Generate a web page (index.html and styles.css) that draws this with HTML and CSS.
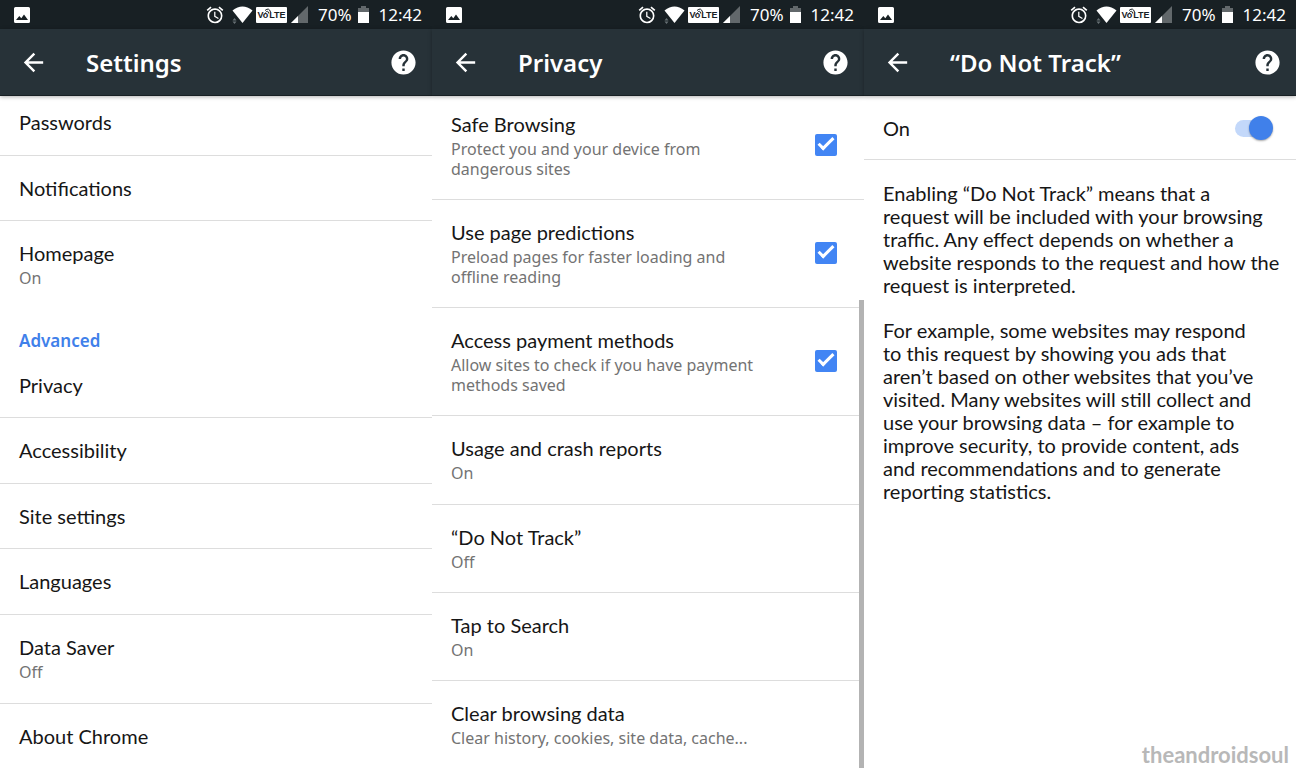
FILE: index.html
```html
<!DOCTYPE html>
<html lang="en">
<head>
    <meta charset="UTF-8">
    <meta name="viewport" content="width=device-width, initial-scale=1">
    <title>Chrome Settings</title>
    <link rel="stylesheet" href="styles.css">
</head>
<body>
<!-- Shared icons -->
<svg class="icon-defs" aria-hidden="true">
    <symbol id="icon-photo" viewBox="0 0 16 16">
        <path fill="#fff" fill-rule="evenodd" d="M1.5 0h13A1.5 1.5 0 0 1 16 1.500v13a1.500 1.500 0 0 1-1.500 1.500h-13A1.500 1.500 0 0 1 0 14.500v-13A1.500 1.500 0 0 1 1.500 0zM2 13h12L10 7.500 7.300 11.300 5.300 9z"/>
    </symbol>
    <symbol id="icon-alarm" viewBox="0 0 24 24">
        <path fill="#fff" d="M22 5.720l-4.600-3.860-1.290 1.530 4.600 3.860L22 5.720zM7.880 3.390L6.600 1.860 2 5.710l1.290 1.530 4.590-3.850zM12.500 8H11v6l4.750 2.850.750-1.230-4-2.370V8zM12 4c-4.970 0-9 4.030-9 9s4.020 9 9 9a9 9 0 0 0 0-18zm0 16c-3.870 0-7-3.130-7-7s3.130-7 7-7 7 3.130 7 7-3.130 7-7 7z"/>
    </symbol>
    <symbol id="icon-wifi" viewBox="0 0 21 18">
        <path fill="#fff" d="M0.500 4.500Q10.500-3.500 20.500 4.500L10.500 17z"/>
        <path fill="#677074" d="M0.500 14.500L2.500 12l2 2.500zM0.500 15.500l2 2.500 2-2.500z"/>
    </symbol>
    <symbol id="icon-signal" viewBox="0 0 17 17">
        <path fill="#62686b" d="M17 0v17H0z"/>
        <path fill="#fff" d="M7 10v7H0z"/>
    </symbol>
    <symbol id="icon-battery" viewBox="0 0 11 17">
        <path fill="#62686b" d="M3 0h5v2h3v5H0V2h3z"/>
        <path fill="#fff" d="M0 6h11v11H0z"/>
    </symbol>
    <symbol id="icon-waves" viewBox="0 0 8 7">
        <path fill="none" stroke="#182024" d="M1 2.500Q5-1 6.500 4M1.500 4.500Q4 1.500 4.700 5.500"/>
    </symbol>
    <symbol id="icon-back" viewBox="0 0 24 24">
        <path fill="#fff" d="M20 11H7.830l5.590-5.590L12 4l-8 8 8 8 1.410-1.410L7.830 13H20v-2z"/>
    </symbol>
    <symbol id="icon-help" viewBox="0 0 24 24">
        <path fill="#fff" d="M12 2C6.480 2 2 6.480 2 12s4.480 10 10 10 10-4.480 10-10S17.520 2 12 2zm1 17h-2v-2h2v2zm2.070-7.750l-.9.920C13.450 12.900 13 13.500 13 15h-2v-.5c0-1.100.450-2.100 1.170-2.830l1.240-1.260c.370-.360.590-.860.590-1.410 0-1.100-.9-2-2-2s-2 .9-2 2H8c0-2.210 1.790-4 4-4s4 1.790 4 4c0 .880-.360 1.680-.930 2.250z"/>
    </symbol>
</svg>

<main class="screens">
    <section class="screen">
        <div class="status-bar">
            <svg class="icon-photo"><use href="#icon-photo"/></svg>
            <svg class="icon-alarm"><use href="#icon-alarm"/></svg>
            <svg class="icon-wifi"><use href="#icon-wifi"/></svg>
            <span class="volte">Vo<svg><use href="#icon-waves"/></svg>LTE</span>
            <svg class="icon-signal"><use href="#icon-signal"/></svg>
            <span class="percent">70%</span>
            <svg class="icon-battery"><use href="#icon-battery"/></svg>
            <span class="clock">12:42</span>
        </div>
        <header class="toolbar">
            <button type="button" aria-label="Back"><svg><use href="#icon-back"/></svg></button>
            <h1>Settings</h1>
            <button type="button" aria-label="Help"><svg><use href="#icon-help"/></svg></button>
        </header>
        <nav class="list">
            <a class="row scrolled" href="#"><span class="title">Passwords</span></a>
            <a class="row" href="#"><span class="title">Notifications</span></a>
            <a class="row last" href="#"><span class="title">Homepage</span><span class="summary">On</span></a>
            <h2>Advanced</h2>
            <a class="row" href="#"><span class="title">Privacy</span></a>
            <a class="row" href="#"><span class="title">Accessibility</span></a>
            <a class="row" href="#"><span class="title">Site settings</span></a>
            <a class="row" href="#"><span class="title">Languages</span></a>
            <a class="row" href="#"><span class="title">Data Saver</span><span class="summary">Off</span></a>
            <a class="row last" href="#"><span class="title">About Chrome</span></a>
        </nav>
    </section>

    <section class="screen">
        <div class="status-bar">
            <svg class="icon-photo"><use href="#icon-photo"/></svg>
            <svg class="icon-alarm"><use href="#icon-alarm"/></svg>
            <svg class="icon-wifi"><use href="#icon-wifi"/></svg>
            <span class="volte">Vo<svg><use href="#icon-waves"/></svg>LTE</span>
            <svg class="icon-signal"><use href="#icon-signal"/></svg>
            <span class="percent">70%</span>
            <svg class="icon-battery"><use href="#icon-battery"/></svg>
            <span class="clock">12:42</span>
        </div>
        <header class="toolbar">
            <button type="button" aria-label="Back"><svg><use href="#icon-back"/></svg></button>
            <h1>Privacy</h1>
            <button type="button" aria-label="Help"><svg><use href="#icon-help"/></svg></button>
        </header>
        <div class="list privacy">
            <label class="row scrolled" for="safe-browsing">
                <span class="title">Safe Browsing</span>
                <span class="summary">Protect you and your device from dangerous sites</span>
                <input type="checkbox" id="safe-browsing" class="checkbox" checked>
            </label>
            <label class="row" for="predictions">
                <span class="title">Use page predictions</span>
                <span class="summary">Preload pages for faster loading and offline reading</span>
                <input type="checkbox" id="predictions" class="checkbox" checked>
            </label>
            <label class="row" for="payment-methods">
                <span class="title">Access payment methods</span>
                <span class="summary">Allow sites to check if you have payment methods saved</span>
                <input type="checkbox" id="payment-methods" class="checkbox" checked>
            </label>
            <a class="row" href="#"><span class="title">Usage and crash reports</span><span class="summary">On</span></a>
            <a class="row" href="#"><span class="title">“Do Not Track”</span><span class="summary">Off</span></a>
            <a class="row" href="#"><span class="title">Tap to Search</span><span class="summary">On</span></a>
            <a class="row last" href="#"><span class="title">Clear browsing data</span><span class="summary">Clear history, cookies, site data, cache...</span></a>
        </div>
        <div class="scroll-thumb"></div>
    </section>

    <section class="screen">
        <div class="status-bar">
            <svg class="icon-photo"><use href="#icon-photo"/></svg>
            <svg class="icon-alarm"><use href="#icon-alarm"/></svg>
            <svg class="icon-wifi"><use href="#icon-wifi"/></svg>
            <span class="volte">Vo<svg><use href="#icon-waves"/></svg>LTE</span>
            <svg class="icon-signal"><use href="#icon-signal"/></svg>
            <span class="percent">70%</span>
            <svg class="icon-battery"><use href="#icon-battery"/></svg>
            <span class="clock">12:42</span>
        </div>
        <header class="toolbar">
            <button type="button" aria-label="Back"><svg><use href="#icon-back"/></svg></button>
            <h1>“Do Not Track”</h1>
            <button type="button" aria-label="Help"><svg><use href="#icon-help"/></svg></button>
        </header>
        <label class="switch-row" for="dnt">
            <span class="title">On</span>
            <input type="checkbox" role="switch" id="dnt" class="switch" checked>
        </label>
        <div class="description">
            <p>
                Enabling “Do Not Track” means that a<br>
                request will be included with your browsing<br>
                traffic. Any effect depends on whether a<br>
                website responds to the request and how the<br>
                request is interpreted.
            </p>
            <p>
                For example, some websites may respond<br>
                to this request by showing you ads that<br>
                aren’t based on other websites that you’ve<br>
                visited. Many websites will still collect and<br>
                use your browsing data – for example to<br>
                improve security, to provide content, ads<br>
                and recommendations and to generate<br>
                reporting statistics.
            </p>
        </div>
        <span class="watermark">theandroidsoul</span>
    </section>
</main>
</body>
</html>
```
FILE: styles.css
```css
*, *::after {
    box-sizing: border-box;
}
body {
    margin: 0;
    background: #fff;
    color: #161616;
    font-family: "Noto Sans", "Open Sans", sans-serif;
}
h1, h2, p {
    margin: 0;
}
a {
    color: inherit;
    text-decoration: none;
}
.icon-defs {
    display: none;
}
.screens {
    display: grid;
    grid-template-columns: repeat(3, 1fr);
    min-height: 100vh;
}
.screen {
    position: relative;
    display: flex;
    flex-direction: column;
}

/* Status bar */
.status-bar {
    display: flex;
    align-items: center;
    height: 29px;
    padding: 0 10px 0 14px;
    background: #182024;
    color: #fff;
    font-size: 17px;
}
.icon-photo {
    width: 16px;
    height: 16px;
    margin-right: auto;
}
.icon-alarm {
    width: 20px;
    height: 20px;
}
.icon-wifi {
    width: 21px;
    height: 18px;
    margin: 0 3px 0 7px;
}
.volte {
    display: flex;
    align-items: center;
    justify-content: center;
    width: 31px;
    height: 16px;
    margin-right: 4px;
    border-radius: 1px;
    background: #fff;
    color: #182024;
    font-family: "Liberation Sans", Arial, sans-serif;
    font-size: 9px;
    font-weight: bold;
}
.volte svg {
    width: 8px;
    height: 7px;
    margin: -6px -3px 0 -4px;
}
.icon-signal {
    width: 17px;
    height: 17px;
}
.percent {
    margin: 0 6px 0 10px;
}
.icon-battery {
    width: 11px;
    height: 17px;
}
.clock {
    margin-left: 10px;
}

/* Toolbar */
.toolbar {
    display: flex;
    align-items: center;
    height: 67px;
    padding: 0 14px 0 19px;
    background: #273238;
    color: #fff;
    border-bottom: 1px solid #182024;
    box-shadow: 0 1px 4px rgba(0, 0, 0, 0.3);
}
.toolbar h1 {
    flex: 1;
    margin-left: 38px;
    font-size: 24px;
    font-weight: 600;
}
.toolbar button {
    display: flex;
    padding: 0;
    border: none;
    background: none;
    cursor: pointer;
}
.toolbar svg {
    width: 29px;
    height: 29px;
}

/* Preference rows */
.list {
    flex: 1;
    display: flex;
    flex-direction: column;
}
.list.privacy {
    padding-top: 2px;
}
.list h2 {
    height: 44px;
    padding: 18px 19px 0;
    color: #4080ea;
    font-size: 17px;
    line-height: 28px;
    font-weight: 600;
}
.row {
    position: relative;
    flex: 1 0 auto;
    padding: 19px 100px 19px 19px;
    border-bottom: 1px solid #ddd;
}
.row.scrolled {
    padding-top: 13px;
}
.row.last {
    border-bottom: none;
}
.title {
    display: block;
    font-family: Lato, sans-serif;
    font-size: 20px;
    line-height: 26px;
}
.summary {
    display: block;
    margin: 2px 0 1px;
    color: #737373;
    font-size: 16px;
    line-height: 20px;
}
.checkbox {
    appearance: none;
    position: absolute;
    right: 27px;
    bottom: 43px;
    width: 22px;
    height: 22px;
    margin: 0;
    border-radius: 2px;
    background: #4285f4;
}
.checkbox::after {
    content: "";
    position: absolute;
    top: 4px;
    left: 3px;
    width: 16px;
    height: 8px;
    border: solid #fff;
    border-width: 0 0 3px 3px;
    transform: rotate(-45deg);
}
.scroll-thumb {
    position: absolute;
    top: 300px;
    right: 0;
    bottom: 0;
    width: 5px;
    background: #b3b3b3;
}

/* Do Not Track */
.switch-row {
    display: flex;
    align-items: center;
    justify-content: space-between;
    height: 64px;
    padding: 1px 23px 0 19px;
    border-bottom: 1px solid #ddd;
}
.switch {
    appearance: none;
    position: relative;
    width: 38px;
    height: 17px;
    margin: 0;
    border-radius: 9px;
    background: #c3d8fa;
}
.switch::after {
    content: "";
    position: absolute;
    top: -4px;
    right: 0;
    width: 24px;
    height: 24px;
    border-radius: 50%;
    background: #4080ea;
    box-shadow: 0 1px 2px rgba(0, 0, 0, 0.35);
}
.description {
    padding: 22px 12px 22px 19px;
    font-family: Lato, sans-serif;
    font-size: 20px;
    line-height: 23px;
}
.description p + p {
    margin-top: 22px;
}
.watermark {
    position: absolute;
    right: 7px;
    bottom: 0;
    color: #b8b8b8;
    font-family: Lato, sans-serif;
    font-size: 22px;
    font-weight: bold;
}
```
